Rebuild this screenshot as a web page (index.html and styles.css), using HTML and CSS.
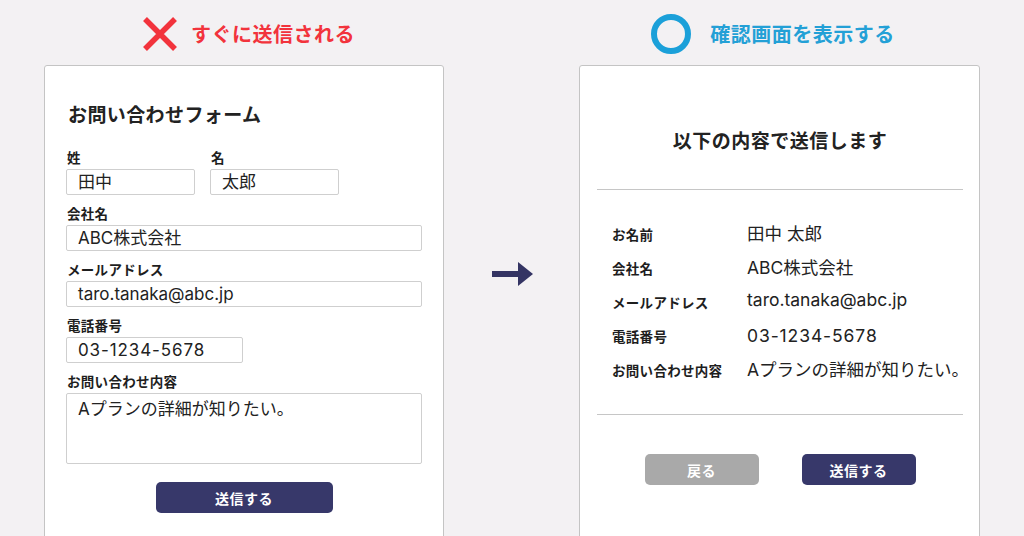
FILE: index.html
```html
<!DOCTYPE html>
<html lang="ja">
<head>
<meta charset="utf-8">
<title>確認画面の比較</title>
<link rel="stylesheet" href="styles.css">
</head>
<body>
<div class="page">
  <section class="col col-left">
    <header class="head head-bad">
      <svg class="mark" width="36" height="34" viewBox="0 0 36 34" aria-hidden="true">
        <path d="M3 2 L33 32 M33 2 L3 32" stroke="#f2333c" stroke-width="5.5" fill="none"/>
      </svg>
      <span class="head-text">すぐに送信される</span>
    </header>
    <div class="card card-form">
      <h2 class="form-title">お問い合わせフォーム</h2>
      <div class="name-row">
        <div class="group">
          <div class="label">姓</div>
          <div class="field w-half">田中</div>
        </div>
        <div class="group">
          <div class="label">名</div>
          <div class="field w-half">太郎</div>
        </div>
      </div>
      <div class="group">
        <div class="label">会社名</div>
        <div class="field">ABC株式会社</div>
      </div>
      <div class="group">
        <div class="label">メールアドレス</div>
        <div class="field">taro.tanaka@abc.jp</div>
      </div>
      <div class="group">
        <div class="label">電話番号</div>
        <div class="field w-tel tel">03-1234-5678</div>
      </div>
      <div class="group">
        <div class="label">お問い合わせ内容</div>
        <div class="field area">Aプランの詳細が知りたい。</div>
      </div>
      <div class="btn-row">
        <span class="btn btn-primary btn-wide">送信する</span>
      </div>
    </div>
  </section>

  <div class="arrow-col">
    <svg class="arrow" width="41" height="24" viewBox="0 0 41 24" aria-hidden="true">
      <rect x="0" y="9" width="28" height="6" fill="#343463"/>
      <path d="M26 0 L41 12 L26 24 Z" fill="#343463"/>
    </svg>
  </div>

  <section class="col col-right">
    <header class="head head-good">
      <svg class="mark" width="40" height="40" viewBox="0 0 40 40" aria-hidden="true">
        <circle cx="20" cy="20" r="17" stroke="#1ba0d9" stroke-width="6" fill="none"/>
      </svg>
      <span class="head-text">確認画面を表示する</span>
    </header>
    <div class="card card-confirm">
      <h2 class="confirm-title">以下の内容で送信します</h2>
      <hr class="rule">
      <dl class="rows">
        <div class="row"><dt>お名前</dt><dd>田中 太郎</dd></div>
        <div class="row"><dt>会社名</dt><dd>ABC株式会社</dd></div>
        <div class="row"><dt>メールアドレス</dt><dd class="up">taro.tanaka@abc.jp</dd></div>
        <div class="row"><dt>電話番号</dt><dd class="tel">03-1234-5678</dd></div>
        <div class="row"><dt>お問い合わせ内容</dt><dd>Aプランの詳細が知りたい。</dd></div>
      </dl>
      <hr class="rule">
      <div class="btn-pair">
        <span class="btn btn-back">戻る</span>
        <span class="btn btn-primary">送信する</span>
      </div>
    </div>
  </section>
</div>
</body>
</html>
```

FILE: styles.css
```css
* { box-sizing: border-box; }

html, body {
  margin: 0;
  padding: 0;
  height: 536px;
  overflow: hidden;
}

body {
  background: #f3f1f3;
  font-family: Inter, "Noto Sans CJK JP", sans-serif;
  color: #222;
}

.page {
  display: flex;
  align-items: flex-start;
  padding-left: 44px;
}

.col {
  display: flex;
  flex-direction: column;
}
.col-left { width: 400px; }
.col-right { width: 401px; }

.head {
  height: 65px;
  padding-top: 3px;
  display: flex;
  align-items: center;
  justify-content: center;
  font-family: "Noto Sans CJK JP", sans-serif;
  font-weight: 700;
  font-size: 20px;
  line-height: 28px;
  letter-spacing: 0.5px;
}
.head-bad { color: #f2333c; gap: 13px; padding-left: 9px; }
.head-good { color: #23a0d6; gap: 19px; padding-right: 13px; }
.mark { display: block; flex: none; }

.card {
  background: #fff;
  border: 1px solid #c4c4c4;
  border-radius: 3px;
  height: 500px;
}

/* left form */
.card-form {
  padding: 35px 21px 0 21px;
}
.form-title {
  margin: 0 0 22px 2px;
  font-family: "Noto Sans CJK JP", sans-serif;
  font-size: 19px;
  line-height: 26px;
  font-weight: 700;
  letter-spacing: 0.4px;
}
.name-row {
  display: flex;
  gap: 15px;
}
.group { margin-bottom: 10px; }
.label {
  margin: 0 0 4px 1px;
  font-family: "Noto Sans CJK JP", sans-serif;
  font-size: 13.5px;
  line-height: 16px;
  font-weight: 700;
  letter-spacing: 0.3px;
  color: #1e1e1e;
}
.field {
  height: 26px;
  border: 1px solid #cfcfcf;
  border-radius: 2px;
  padding: 0 11px;
  font-size: 17px;
  line-height: 24px;
  color: #222;
  background: #fff;
  white-space: nowrap;
}
.w-half { width: 129px; }
.w-tel { width: 177px; }
.tel { letter-spacing: 0.9px; }
.area {
  height: 71px;
  padding-top: 3px;
}
.btn-row {
  display: flex;
  justify-content: center;
  padding-top: 8px;
}

.btn {
  display: flex;
  align-items: center;
  justify-content: center;
  height: 31px;
  width: 114px;
  border-radius: 5px;
  color: #fff;
  font-family: "Noto Sans CJK JP", sans-serif;
  font-size: 14px;
  font-weight: 700;
  letter-spacing: 0.5px;
}
.btn-wide { width: 177px; }
.btn-primary { background: #37386a; }
.btn-back { background: #a9a9a9; }

/* right confirm */
.card-confirm {
  padding: 60px 16px 0 17px;
}
.confirm-title {
  margin: 0;
  text-align: center;
  font-family: "Noto Sans CJK JP", sans-serif;
  font-size: 19px;
  line-height: 28px;
  font-weight: 700;
  letter-spacing: 0.5px;
}
.rule {
  margin: 0;
  border: 0;
  border-top: 1px solid #c6c6c6;
}
.confirm-title + .rule { margin-top: 35px; }
.rows {
  margin: 27px 0 27px 0;
  padding-left: 15px;
}
.row {
  display: flex;
  align-items: center;
  height: 34px;
}
.row dt {
  flex: none;
  width: 135px;
  font-family: "Noto Sans CJK JP", sans-serif;
  font-size: 13.5px;
  line-height: 16px;
  font-weight: 700;
  letter-spacing: 0.3px;
  color: #1e1e1e;
}
.row dd {
  margin: 0;
  font-size: 17.5px;
  line-height: 24px;
  color: #222;
  white-space: nowrap;
}
.row dd.up { margin-top: -4px; }
.btn-pair {
  display: flex;
  justify-content: center;
  gap: 43px;
  padding-top: 39px;
}

/* arrow */
.arrow-col {
  width: 135px;
  display: flex;
  justify-content: center;
  padding-top: 262px;
  padding-left: 1px;
}
.arrow { display: block; }
```
